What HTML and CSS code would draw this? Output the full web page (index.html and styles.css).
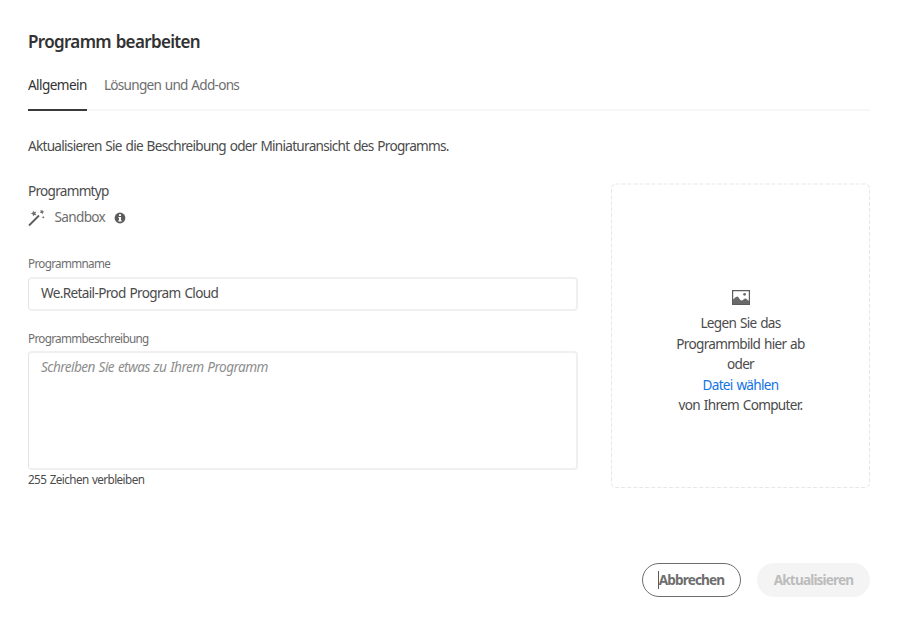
FILE: index.html
```html
<!DOCTYPE html>
<html lang="de">
<head>
<meta charset="utf-8">
<title>Programm bearbeiten</title>
<link rel="stylesheet" href="styles.css">
</head>
<body>
<main class="dialog">
  <h1 class="title"><span class="t">Programm bearbeiten</span></h1>
  <nav class="tabs">
    <a class="tab active"><span class="t">Allgemein</span></a>
    <a class="tab second"><span class="t">Lösungen und Add-ons</span></a>
  </nav>
  <p class="intro"><span class="t">Aktualisieren Sie die Beschreibung oder Miniaturansicht des Programms.</span></p>
  <div class="content">
    <form class="form">
      <div class="type-label"><span class="t">Programmtyp</span></div>
      <div class="type-value">
        <svg class="wand" width="18" height="18" viewBox="0 0 18 18"><path d="M1 16.500 11 6.500" stroke="#5c5c5c" stroke-width="1.800" fill="none"/><path d="M5 1.500 6.300 3.300 8.300 2.600 7.300 4.600 8.500 6.300 6.400 5.900 5 7.300 4.700 5.300 2.800 4.400 4.800 3.600ZM14.200 .8l.6 1.500 1.700.5-1.500.8-.4 1.600-1-1.200-1.700.1.900-1.400-.6-1.500 1.500.4ZM15.200 7.300l1.300 1-1.300 1.100-1.100-1.100Z" fill="#6e6e6e"/></svg>
        <span class="t sandbox">Sandbox</span>
        <svg class="info" width="12" height="12" viewBox="0 0 12 12"><circle cx="6" cy="6" r="5.400" fill="#5c5c5c"/><path d="M5 2.200h2v1.700H5ZM4.400 4.900H7v3.400h.7v1.200H4.300V8.300H5V6h-.6Z" fill="#fff"/></svg>
      </div>
      <label class="label name-label"><span class="t">Programmname</span></label>
      <div class="input"><span class="t">We.Retail-Prod Program Cloud</span></div>
      <label class="label desc-label"><span class="t">Programmbeschreibung</span></label>
      <div class="textarea"><span class="t">Schreiben Sie etwas zu Ihrem Programm</span></div>
      <div class="counter"><span class="t">255 Zeichen verbleiben</span></div>
    </form>
    <section class="drop">
      <svg class="frame" width="260" height="306"><rect x="1.500" y="1" width="258" height="303.500" rx="4"/></svg>
      <svg class="picture" width="18" height="15" viewBox="0 0 18 15"><path d="M.6.6h16.800v13.800H.6Z" fill="#fff" stroke="#5c5c5c" stroke-width="1.200"/><path d="M1 9.500C3 7.800 4.500 6.500 5.500 6.500S8 10.500 9.500 10.500 12 8.500 13.300 8.500 15.500 10 17 11V14H1Z" fill="#6a6a6a"/><circle cx="12.600" cy="4.300" r="1.400" fill="#6a6a6a"/></svg>
      <span class="t">Legen Sie das</span>
      <span class="t">Programmbild hier ab</span>
      <span class="t">oder</span>
      <a class="t choose">Datei wählen</a>
      <span class="t">von Ihrem Computer.</span>
    </section>
  </div>
  <footer class="actions">
    <button class="button cancel"><span class="caret"></span><span class="t">Abbrechen</span></button>
    <button class="button update" disabled><span class="t">Aktualisieren</span></button>
  </footer>
</main>
</body>
</html>
```
FILE: styles.css
```css
* { box-sizing: border-box; }
body {
  margin: 0;
  background: #fff;
  color: #4b4b4b;
  font: 13.6px/20px "Noto Sans", "Open Sans", sans-serif;
  letter-spacing: -0.72px;
  word-spacing: 0.9px;
}
.t { white-space: nowrap; }
.dialog { height: 625px; padding: 31px 32px 0 28px; }
.title { margin: 0; height: 44px; font-size: 17px; line-height: 22px; font-weight: 600; letter-spacing: -0.66px; color: #323232; }
.tabs { display: flex; gap: 17px; height: 36px; border-bottom: 2px solid #f7f7f7; }
.tab { height: 36px; color: #6e6e6e; letter-spacing: -0.75px; }
.tab.active { width: 59px; letter-spacing: -0.58px; color: #323232; border-bottom: 2px solid #3a3a3a; }
.intro { margin: 25px 0 0; height: 20px; }
.content { display: flex; justify-content: space-between; margin-top: 27px; height: 306px; }
.form { width: 550px; }
.type-label { margin-top: -2px; height: 26px; letter-spacing: -0.74px; }
.type-value { display: flex; align-items: center; height: 20px; color: #6e6e6e; }
.wand { margin-top: 2px; }
.sandbox { margin: 0 9px 0 8.5px; letter-spacing: -0.68px; }
.info { margin-top: 2px; }
.label { display: block; height: 20px; font-size: 11.7px; letter-spacing: -0.68px; color: #6e6e6e; }
.name-label { margin-top: 26px; }
.desc-label { margin-top: 17px; }
.input, .textarea { border: 2px solid #f0f0f0; border-left: 1px solid #e4e4e4; border-radius: 4px; }
.input { height: 34px; margin-top: 4px; padding: 4px 12px; letter-spacing: -0.66px; }
.textarea { height: 119px; margin-top: 3px; padding: 4px 12px; font-style: italic; letter-spacing: -0.57px; color: #8e8e8e; }
.counter { margin-top: -1px; font-size: 11.7px; letter-spacing: -0.58px; }
.drop { position: relative; width: 260px; display: flex; flex-direction: column; align-items: center; line-height: 20.5px; padding: 107px 0 0 1px; letter-spacing: -0.7px; }
.frame { position: absolute; left: 0; top: 0; }
.frame rect { fill: none; stroke: #e7e7e7; stroke-width: 1; stroke-dasharray: 4 2; }
.picture { margin-bottom: 8px; }
.choose { color: #1473e6; }
.actions { display: flex; justify-content: flex-end; gap: 16px; margin-top: 74px; }
.button { position: relative; height: 34px; padding: 0; border: 0; border-radius: 17px; font: inherit; font-weight: 700; letter-spacing: -0.85px; }
.cancel { width: 99px; border: 1px solid #6e6e6e; background: #fff; color: #6e6e6e; }
.update { width: 113px; background: #f4f4f4; color: #bcbcbc; }
.caret { position: absolute; left: 15px; top: 7px; width: 1px; height: 18px; background: #5c5c5c; }
```
